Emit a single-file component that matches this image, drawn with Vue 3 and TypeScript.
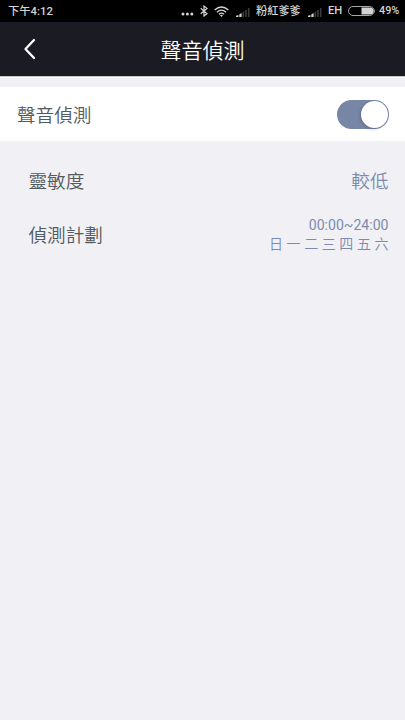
<script setup lang="ts">
import { ref } from 'vue'

const enabled = ref(true)
const days: string[] = ['日', '一', '二', '三', '四', '五', '六']
</script>

<template>
  <div class="screen">
    <div class="status">
      <span class="clock">下午4:12</span>
      <svg class="dots" width="13" height="4" viewBox="0 0 13 4" fill="#d4d4d4">
        <circle cx="2" cy="2" r="1.5" /><circle cx="6.4" cy="2" r="1.5" /><circle cx="10.8" cy="2" r="1.5" />
      </svg>
      <svg class="bluetooth" width="8" height="12" viewBox="0 0 8 12" fill="none" stroke="#d4d4d4" stroke-width="1.2">
        <path d="M.7 3.2 7 8.7 4 11V1l3 2.4L.7 8.8" />
      </svg>
      <svg class="wifi" width="15" height="11" viewBox="0 0 15 11" fill="none" stroke="#d4d4d4" stroke-width="1.3">
        <path d="M.6 4Q7.5-2 14.400 4M2.900 6.200Q7.5 2 12.100 6.200M5 8.300Q7.5 6 10 8.300" />
        <path d="M6 9.200 7.5 10.900 9 9.200Q7.5 8.200 6 9.200Z" fill="#d4d4d4" stroke="none" />
      </svg>
      <svg class="signal first" width="14" height="10" viewBox="0 0 14 10">
        <path d="M0 10V8.8L2.4 8v2zM3.3 10V7.4L5.6 6v4z" fill="#d4d4d4" />
        <path d="M6.5 10V5.3l1.7-1V10zM9.2 10V3.5l1.6-1V10zM11.9 10V1.6l1.6-1V10z" fill="#3c3c3c" />
      </svg>
      <span class="carrier">粉紅爹爹</span>
      <svg class="signal second" width="14" height="10" viewBox="0 0 14 10">
        <path d="M0 10V8.8L2.4 8v2zM3.3 10V7.4L5.6 6v4z" fill="#d4d4d4" />
        <path d="M6.5 10V5.3l1.7-1V10zM9.2 10V3.5l1.6-1V10zM11.9 10V1.6l1.6-1V10z" fill="#3c3c3c" />
      </svg>
      <span class="network">EH</span>
      <svg class="battery" width="28" height="10" viewBox="0 0 28 10">
        <rect x=".5" y=".5" width="25.6" height="9" rx="4.5" fill="none" stroke="#a8a8a8" />
        <path d="M13.500 1.500H22a3.500 3.500 0 0 1 0 7H13.500z" fill="#d4d4d4" />
        <path d="M26.300 3.200Q28 5 26.300 6.800z" fill="#a8a8a8" />
      </svg>
      <span class="percent">49%</span>
    </div>

    <header class="header">
      <button class="back" aria-label="返回">
        <svg width="13" height="22" viewBox="0 0 13 22" fill="none" stroke="#fff" stroke-width="2.300" stroke-linecap="round" stroke-linejoin="round">
          <path d="M11 2 2.500 11l8.500 9" />
        </svg>
      </button>
      <h1>聲音偵測</h1>
    </header>

    <main>
      <section class="row main-row">
        <span class="label">聲音偵測</span>
        <button class="toggle" :class="{ on: enabled }" role="switch" :aria-checked="enabled" @click="enabled = !enabled">
          <span class="knob"></span>
        </button>
      </section>
      <section v-if="enabled" class="options">
        <div class="row sub">
          <span class="label">靈敏度</span>
          <span class="value">較低</span>
        </div>
        <div class="row sub">
          <span class="label">偵測計劃</span>
          <div class="plan">
            <span class="time">00:00~24:00</span>
            <div class="days"><span v-for="day in days" :key="day">{{ day }}</span></div>
          </div>
        </div>
      </section>
    </main>
  </div>
</template>

<style>
body {
  background: #f0f0f5;
}
</style>

<style scoped>
.screen {
  box-sizing: border-box;
  height: 720px;
  overflow: hidden;
  background: #f0f0f5;
  font-family: Roboto, "Noto Sans CJK TC", sans-serif;
  color: #515b60;
}
.status {
  display: flex;
  align-items: center;
  height: 22px;
  padding-left: 8px;
  background: #000;
  color: #d4d4d4;
  font-size: 11.2px;
  font-weight: 500;
  line-height: 22px;
  white-space: nowrap;
}
.status svg {
  flex: none;
}
.clock {
  width: 173px;
  font-size: 11.3px;
}
.clock, .carrier, .network, .percent {
  flex: none;
}
.clock, .carrier {
  padding-top: 1px;
}
.dots {
  margin-top: 6px;
}
.bluetooth {
  margin-left: 6px;
}
.wifi {
  margin-left: 6px;
}
.first {
  margin-left: 7px;
}
.signal {
  margin-top: 1px;
}
.carrier {
  width: 45px;
  margin-left: 6px;
}
.second {
  margin-left: 7px;
}
.network {
  width: 15px;
  margin-left: 6px;
  font-size: 11.2px;
}
.battery {
  margin-left: 5px;
}
.percent {
  margin-left: 3px;
  font-size: 10.800px;
}
.header {
  display: grid;
  grid-template-columns: 60px 1fr 60px;
  align-items: center;
  box-sizing: border-box;
  height: 55px;
  border-bottom: 1px solid #c9c8cf;
  background: #1b1b23;
}
.back {
  display: flex;
  padding: 0 0 0 23px;
  border: 0;
  background: none;
}
h1 {
  margin: 0;
  padding-top: 3px;
  color: #fff;
  font-size: 21px;
  font-weight: 350;
  line-height: 30px;
  text-align: center;
}
main {
  padding-top: 9px;
  border-top: 1px solid #fafafc;
}
.row {
  display: flex;
  align-items: center;
  justify-content: space-between;
  box-sizing: border-box;
  height: 54px;
  padding: 0 16.500px 0 17px;
  font-size: 18.6px;
}
.label, .value {
  padding-bottom: 2px;
  font-weight: 350;
}
.main-row {
  background: #fff;
}
.sub {
  padding-left: 28.500px;
}
.options {
  padding-top: 12px;
}
.toggle {
  display: flex;
  box-sizing: border-box;
  width: 52px;
  height: 29px;
  padding: 1px;
  border: 0;
  border-radius: 15px;
  background: #b8bcc6;
}
.toggle.on {
  justify-content: flex-end;
  background: #7886a6;
}
.knob {
  width: 27px;
  height: 27px;
  border-radius: 50%;
  background: #fff;
  box-shadow: -1px 1px 3px rgba(40, 50, 80, 0.3);
}
.value, .plan {
  color: #7c8bad;
}
.plan {
  display: flex;
  flex-direction: column;
  align-items: flex-end;
  padding-top: 2px;
  font-size: 14px;
  line-height: 19px;
}
.time {
  font-size: 14.100px;
}
.days {
  display: flex;
  gap: 3.600px;
  font-weight: 350;
}
</style>
